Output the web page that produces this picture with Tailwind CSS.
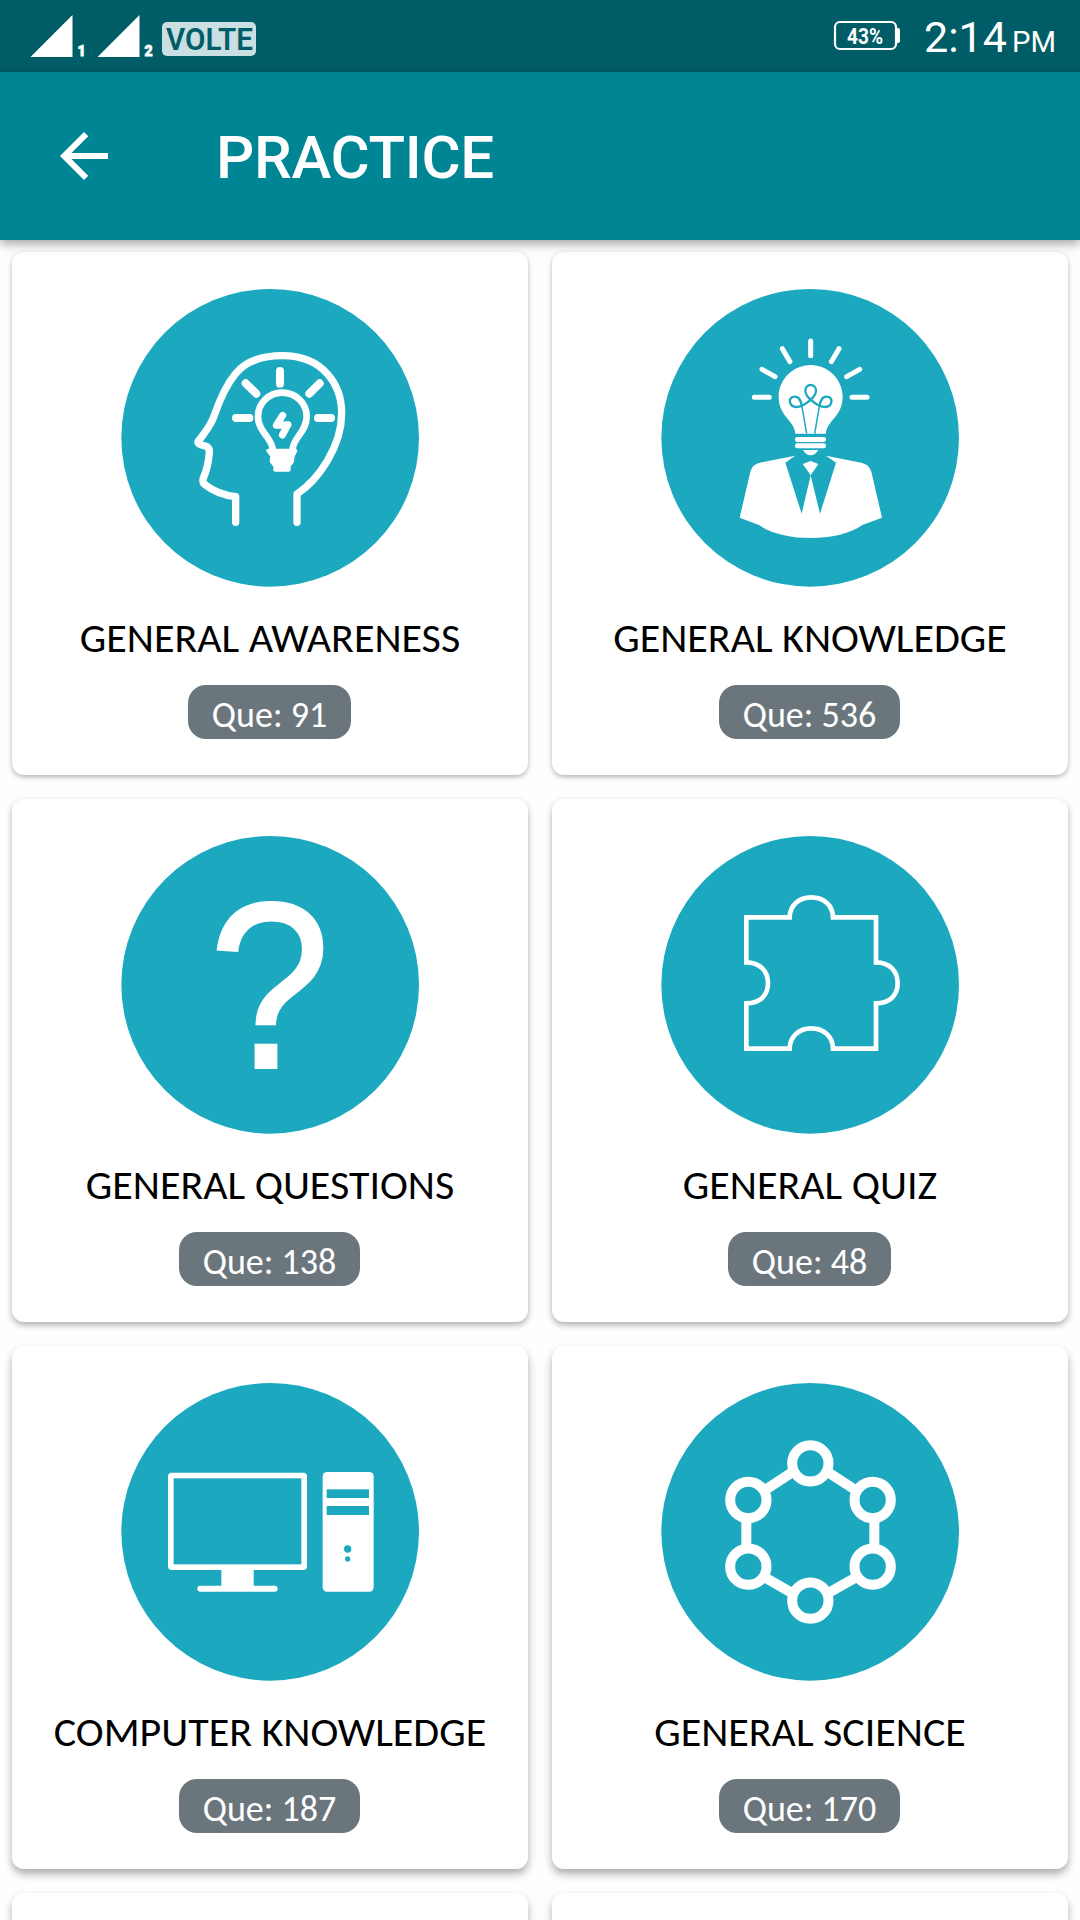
<!DOCTYPE html>
<html lang="en">
<head>
    <meta charset="UTF-8">
    <title>Practice</title>
    <script src="https://cdn.jsdelivr.net/npm/@tailwindcss/browser@4"></script>
</head>
<body class="w-[1080px] h-[1920px] overflow-hidden bg-[#fefefe] font-['Roboto',sans-serif]">

    <!-- Status bar -->
    <div class="flex items-center justify-between h-[72px] bg-[#005c66] text-white">
        <svg class="w-[270px] h-[72px]" viewBox="0 0 270 72">
            <path d="M30.5 57L72.5 15V57Z M97.5 57L139.5 15V57Z" fill="#fff"/>
            <text x="77.5" y="55.5" font-size="14" font-weight="900" fill="#fff" stroke="#fff" stroke-width="0.8">1</text>
            <text x="144.5" y="55.5" font-size="14" font-weight="900" fill="#fff" stroke="#fff" stroke-width="0.8">2</text>
            <rect x="162" y="22" width="94" height="34" rx="5" fill="#c9dfe1"/>
            <text x="166" y="50" font-size="31" font-weight="600" fill="#005c66" textLength="87" lengthAdjust="spacingAndGlyphs">VOLTE</text>
        </svg>
        <svg class="w-[270px] h-[72px]" viewBox="810 0 270 72">
            <rect x="835" y="22" width="61" height="27" rx="5" fill="none" stroke="#fff" stroke-width="2.2"/>
            <path d="M896 28h2q2 0 2 2v11q0 2-2 2h-2z" fill="#fff"/>
            <text x="847" y="44" font-size="22" font-weight="700" fill="#fff" textLength="36" lengthAdjust="spacingAndGlyphs">43%</text>
            <text x="924" y="52" font-size="42" fill="#fff" textLength="83" lengthAdjust="spacingAndGlyphs">2:14</text>
            <text x="1012" y="52" font-size="29" fill="#fff" textLength="44" lengthAdjust="spacingAndGlyphs">PM</text>
        </svg>
    </div>

    <!-- Toolbar -->
    <header class="relative z-10 flex items-center h-[168px] pl-12 bg-[#008594] text-white shadow-[0_4px_10px_rgba(0,0,0,0.35)]">
        <svg class="w-[72px] h-[72px]" viewBox="0 0 24 24" fill="#fff">
            <path d="M20 11H7.830l5.590-5.590L12 4l-8 8 8 8 1.410-1.410L7.830 13H20v-2z"/>
        </svg>
        <h1 class="ml-[96px] text-[60px] leading-[72px] tracking-[-0.3px] font-medium pt-[4px]">PRACTICE</h1>
    </header>

    <!-- Categories -->
    <main class="grid grid-cols-2 gap-6 px-3 pt-3 font-['Carlito','Lato',sans-serif]">

        <div class="flex flex-col items-center h-[523px] pt-7 bg-white rounded-xl shadow-[0_2px_5px_rgba(0,0,0,0.3)]">
            <svg class="w-[320px] h-[320px]" viewBox="0 0 960 960" fill="none" stroke="#fff" stroke-linecap="round" stroke-linejoin="round">
                <circle cx="480.5" cy="473.5" r="446.5" fill="#1ca9c0" stroke="none"/>
                <path stroke-width="22" d="M377 727V650C340 646 310 634 285 614Q276 608 280 594C293 565 296 545 298 518Q299 502 286 498Q262 493 264 485C280 462 302 440 313 406C326 368 345 320 376 282C410 240 460 227 517 227C640 227 695 315 695 400C695 500 625 600 561 642V727"/>
                <path stroke-width="24" d="M510 273v38M407 310l32 31M629 310l-31 31M378 414h40M624 414h39"/>
                <path stroke-width="20" d="M488 508C488 475 444 455 444 410C444 370 476 338 516 338C558 338 590 370 590 410C590 455 548 475 548 508"/>
                <path fill="#fff" stroke-width="12" d="M475 512H556L548 528L546 544L536 558V569H496V558L485 544L487 528Z"/>
                <path stroke-width="21" d="M518 406L499 436L534 434L517 465"/>
            </svg>
            <h2 class="mt-[11px] text-[42px] leading-[54px] text-black whitespace-nowrap">GENERAL AWARENESS</h2>
            <span class="flex items-center justify-center mt-5 mr-px pt-[5px] w-[163px] h-[54px] rounded-[18px] bg-[#6b767c] text-[36px] text-white whitespace-nowrap">Que: 91</span>
        </div>

        <div class="flex flex-col items-center h-[523px] pt-7 bg-white rounded-xl shadow-[0_2px_5px_rgba(0,0,0,0.3)]">
            <svg class="w-[320px] h-[320px]" viewBox="0 0 960 960" fill="#fff">
                <circle cx="480.5" cy="473.5" r="446.5" fill="#1ca9c0"/>
                <path fill="none" stroke="#fff" stroke-width="15" stroke-linecap="round" d="M482 183v44M397 206l23 39M567 206l-23 39M336 268l39 22M629 268l-39 22M313 352h45M606 352h45"/>
                <path d="M436 461C434 420 386 410 386 350C386 298 430 255 482 255C534 255 578 298 578 350C578 410 530 420 528 461Z"/>
                <rect x="435" y="471" width="93" height="15" rx="7"/>
                <rect x="435" y="490" width="93" height="15" rx="7"/>
                <path d="M459 510H505Q496 526 482 526Q468 526 459 510Z"/>
                <path fill="none" stroke="#1ca9c0" stroke-width="7" d="M456 378C452 362 448 350 435 350C422 350 418 359 420 367C423 379 433 383 447 380C464 376 498 352 498 332C498 322 491 315 482 315C473 315 466 322 466 332C466 352 500 376 517 380C531 383 541 379 544 367C546 359 542 350 529 350C516 350 512 362 508 378"/>
                <path fill="none" stroke="#1ca9c0" stroke-width="4.5" d="M455 374L470 461M509 374L494 461"/>
                <path d="M435 527L330 548Q306 553 301 575L269 713L327 735C365 762 422 774 482 774C542 774 599 762 637 735L696 713L664 575Q658 553 634 548L528 527L558 548L510 701L482 586L505 552L482 543L458 552L482 586L455 701L406 548Z"/>
            </svg>
            <h2 class="mt-[11px] text-[42px] leading-[54px] text-black whitespace-nowrap">GENERAL KNOWLEDGE</h2>
            <span class="flex items-center justify-center mt-5 mr-px pt-[5px] w-[181px] h-[54px] rounded-[18px] bg-[#6b767c] text-[36px] text-white whitespace-nowrap">Que: 536</span>
        </div>

        <div class="flex flex-col items-center h-[523px] pt-7 bg-white rounded-xl shadow-[0_3px_6px_rgba(0,0,0,0.32)]">
            <svg class="w-[320px] h-[320px]" viewBox="0 6 960 960" fill="#fff">
                <circle cx="480.5" cy="479.5" r="446.5" fill="#1ca9c0"/>
                <text transform="translate(479 729) scale(0.92 1)" font-size="714" text-anchor="middle" font-family="Liberation Sans, sans-serif" stroke="#fff" stroke-width="6">?</text>
            </svg>
            <h2 class="mt-[11px] text-[42px] leading-[54px] text-black whitespace-nowrap">GENERAL QUESTIONS</h2>
            <span class="flex items-center justify-center mt-5 mr-px pt-[5px] w-[181px] h-[54px] rounded-[18px] bg-[#6b767c] text-[36px] text-white whitespace-nowrap">Que: 138</span>
        </div>

        <div class="flex flex-col items-center h-[523px] pt-7 bg-white rounded-xl shadow-[0_3px_6px_rgba(0,0,0,0.32)]">
            <svg class="w-[320px] h-[320px]" viewBox="0 6 960 960" fill="none">
                <circle cx="480.5" cy="479.5" r="446.5" fill="#1ca9c0"/>
                <path stroke="#fff" stroke-width="14" d="M289 277H419C419 242 446 217 484 217C522 217 549 242 549 277H678V412C718 412 743 438 743 475C743 512 718 535 678 535V671H549C549 636 522 610 484 610C446 610 419 636 419 671H289V535C329 535 354 512 354 475C354 438 329 412 289 412Z"/>
            </svg>
            <h2 class="mt-[11px] text-[42px] leading-[54px] text-black whitespace-nowrap">GENERAL QUIZ</h2>
            <span class="flex items-center justify-center mt-5 mr-px pt-[5px] w-[163px] h-[54px] rounded-[18px] bg-[#6b767c] text-[36px] text-white whitespace-nowrap">Que: 48</span>
        </div>

        <div class="flex flex-col items-center h-[523px] pt-7 bg-white rounded-xl shadow-[0_5px_8px_rgba(0,0,0,0.32)]">
            <svg class="w-[320px] h-[320px]" viewBox="0 12 960 960" fill="#fff">
                <circle cx="480.5" cy="485.5" r="446.5" fill="#1ca9c0"/>
                <rect x="174" y="308" width="417" height="292" rx="11"/>
                <rect x="191" y="325" width="383" height="258" fill="#1ca9c0"/>
                <rect x="334" y="598" width="97" height="55"/>
                <rect x="262" y="647" width="241" height="18" rx="9"/>
                <rect x="638" y="306" width="153" height="359" rx="13"/>
                <g fill="#1ca9c0">
                    <rect x="650" y="358" width="127" height="26"/>
                    <rect x="650" y="408" width="127" height="27"/>
                    <circle cx="713" cy="537" r="11"/>
                    <circle cx="713" cy="567" r="8"/>
                </g>
            </svg>
            <h2 class="mt-[11px] text-[42px] leading-[54px] text-black whitespace-nowrap">COMPUTER KNOWLEDGE</h2>
            <span class="flex items-center justify-center mt-5 mr-px pt-[5px] w-[181px] h-[54px] rounded-[18px] bg-[#6b767c] text-[36px] text-white whitespace-nowrap">Que: 187</span>
        </div>

        <div class="flex flex-col items-center h-[523px] pt-7 bg-white rounded-xl shadow-[0_5px_8px_rgba(0,0,0,0.32)]">
            <svg class="w-[320px] h-[320px]" viewBox="0 12 960 960" fill="#1ca9c0" stroke="#fff" stroke-width="30">
                <circle cx="480.5" cy="485.5" r="446.5" stroke="none"/>
                <path d="M428 306L344 361M533 306L618 361M289 440V540M673 440V540M344 622L428 670M618 622L533 670"/>
                <circle cx="481" cy="280" r="54.5"/>
                <circle cx="295" cy="390" r="54.5"/>
                <circle cx="668" cy="390" r="54.5"/>
                <circle cx="295" cy="590" r="54.5"/>
                <circle cx="668" cy="590" r="54.5"/>
                <circle cx="481" cy="692" r="54.5"/>
            </svg>
            <h2 class="mt-[11px] text-[42px] leading-[54px] text-black whitespace-nowrap">GENERAL SCIENCE</h2>
            <span class="flex items-center justify-center mt-5 mr-px pt-[5px] w-[181px] h-[54px] rounded-[18px] bg-[#6b767c] text-[36px] text-white whitespace-nowrap">Que: 170</span>
        </div>

        <!-- Next row, cut by the bottom edge -->
        <div class="h-[27px] bg-white rounded-t-xl shadow-[0_5px_8px_rgba(0,0,0,0.32)]"></div>
        <div class="h-[27px] bg-white rounded-t-xl shadow-[0_5px_8px_rgba(0,0,0,0.32)]"></div>
    </main>
</body>
</html>
